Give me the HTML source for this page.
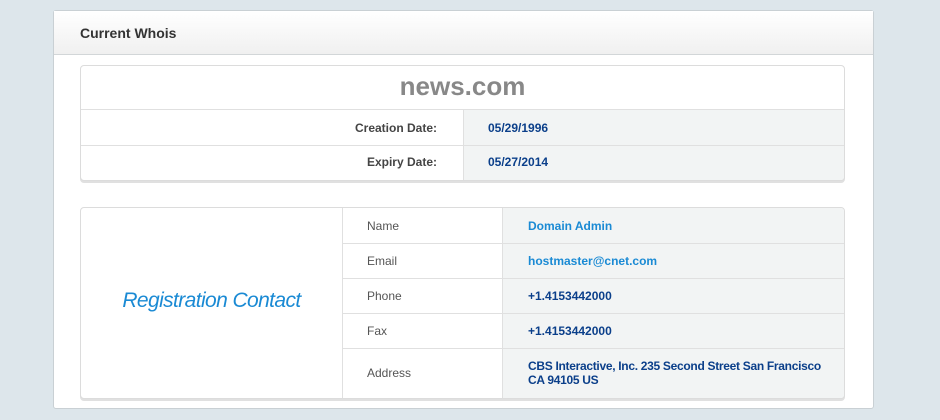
<!DOCTYPE html>
<html><head><style>
*{box-sizing:border-box;margin:0;padding:0}
body{width:940px;height:420px;background:#dde6eb;font-family:"Liberation Sans",sans-serif;position:relative;overflow:hidden}
.panel{position:absolute;left:53px;top:10px;width:821px;height:399px;background:#fff;border:1px solid #c9d0d4;border-radius:3px}
.hdr{height:44px;background:linear-gradient(#fff,#f0f0f0);border-bottom:1px solid #d2d6d8;padding:14px 0 0 26px;font-size:14px;font-weight:bold;color:#333}
.box{position:absolute;background:#fff;border:1px solid #dcdcdc;border-radius:4px;box-shadow:0 2px 0 #e0e0e0;overflow:hidden}
.abs{position:absolute}
.lbl{font-size:12px;font-weight:bold;color:#444;text-align:right}
.val{font-size:12px;font-weight:bold;color:#0b3f8a}
.gray{background:#f2f4f4}
.hl{position:absolute;height:1px;background:#e0e0e0}
.vl{position:absolute;width:1px;background:#e0e0e0}
.k{position:absolute;left:25px;font-size:12px;color:#555}
.v{position:absolute;left:26px;font-size:12px;font-weight:bold;color:#0b3f8a}
</style></head><body>
<div class="panel"><div class="hdr">Current Whois</div></div>

<div class="box" style="left:80px;top:65px;width:765px;height:116px">
  <div class="abs" style="left:0;top:5px;width:100%;text-align:center;font-size:26px;font-weight:bold;color:#888">news.com</div>
  <div class="hl" style="left:0;top:43px;width:100%"></div>
  <div class="abs gray" style="left:382px;top:44px;width:383px;height:72px"></div>
  <div class="vl" style="left:382px;top:44px;height:72px"></div>
  <div class="hl" style="left:0;top:79px;width:100%"></div>
  <div class="abs lbl" style="right:407px;top:55px">Creation Date:</div>
  <div class="abs lbl" style="right:407px;top:89px">Expiry Date:</div>
  <div class="abs val" style="left:407px;top:55px">05/29/1996</div>
  <div class="abs val" style="left:407px;top:89px">05/27/2014</div>
</div>

<div class="box" style="left:80px;top:207px;width:765px;height:192px">
  <div class="abs" style="left:0;top:81px;width:261px;text-align:center;font-size:21px;font-style:italic;color:#1a8ad4;letter-spacing:-0.6px">Registration Contact</div>
  <div class="vl" style="left:261px;top:0;height:192px"></div>
  <div class="abs gray" style="left:422px;top:0;width:343px;height:192px"></div>
  <div class="vl" style="left:421px;top:0;height:192px"></div>
  <div class="hl" style="left:261px;top:35px;width:504px"></div>
  <div class="hl" style="left:261px;top:70px;width:504px"></div>
  <div class="hl" style="left:261px;top:105px;width:504px"></div>
  <div class="hl" style="left:261px;top:140px;width:504px"></div>
  <div class="abs" style="left:261px;top:0;width:160px;height:192px">
    <div class="k" style="top:11px">Name</div>
    <div class="k" style="top:46px">Email</div>
    <div class="k" style="top:81px">Phone</div>
    <div class="k" style="top:116px">Fax</div>
    <div class="k" style="top:158px">Address</div>
  </div>
  <div class="abs" style="left:421px;top:0;width:344px;height:192px">
    <div class="v" style="top:11px;color:#1a8ad4">Domain Admin</div>
    <div class="v" style="top:46px;color:#1a8ad4">hostmaster@cnet.com</div>
    <div class="v" style="top:81px">+1.4153442000</div>
    <div class="v" style="top:116px">+1.4153442000</div>
    <div class="v" style="top:151px;line-height:14px;width:330px;letter-spacing:-0.3px">CBS Interactive, Inc. 235 Second Street San Francisco<br>CA 94105 US</div>
  </div>
</div>
</body></html>
